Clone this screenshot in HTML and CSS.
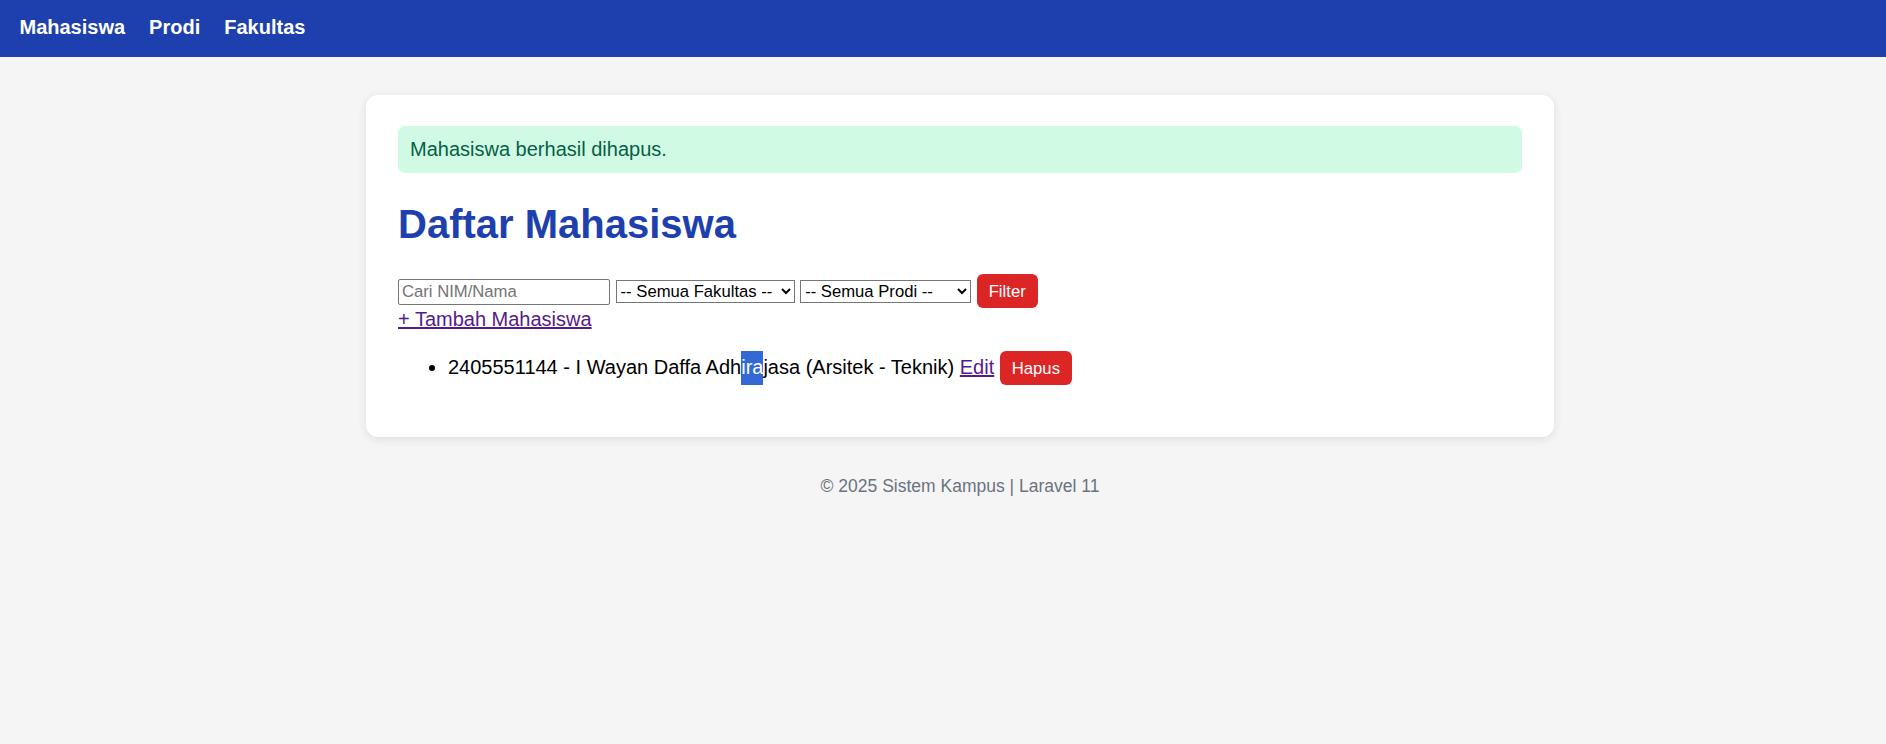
FILE: index.html
```html
<!DOCTYPE html>
<html lang="id">
<head>
<meta charset="utf-8">
<title>Daftar Mahasiswa</title>
<link rel="stylesheet" href="styles.css">
</head>
<body>
<div class="page">
  <nav class="topbar">
    <a class="nav-link" href="#">Mahasiswa</a>
    <a class="nav-link" href="#">Prodi</a>
    <a class="nav-link" href="#">Fakultas</a>
  </nav>

  <main class="card">
    <div class="alert">Mahasiswa berhasil dihapus.</div>
    <h1 class="title">Daftar Mahasiswa</h1>

    <form class="filter">
      <input class="search" type="text" placeholder="Cari NIM/Nama">
      <select class="select select-fak"><option>-- Semua Fakultas --</option></select>
      <select class="select select-prodi"><option>-- Semua Prodi --</option></select>
      <button class="btn" type="button">Filter</button>
    </form>
    <a class="link" href="#">+ Tambah Mahasiswa</a>

    <ul class="list">
      <li>2405551144 - I Wayan Daffa Adh<span class="hl">ira</span>jasa (Arsitek - Teknik) <a class="link" href="#">Edit</a> <button class="btn" type="button">Hapus</button></li>
    </ul>
  </main>

  <footer class="foot">© 2025 Sistem Kampus | Laravel 11</footer>
</div>
</body>
</html>
```

FILE: styles.css
```css
html, body {
  margin: 0;
  padding: 0;
  overflow: hidden;
}

body {
  background: #f5f5f5;
  font-family: "Liberation Sans", Arial, sans-serif;
  font-size: 20px;
  color: #000;
}

.page {
  width: 1920px;
  min-height: 744px;
}

.topbar {
  display: flex;
  gap: 24px;
  height: 57px;
  box-sizing: border-box;
  padding: 16px 19.5px 18px;
  background: #1e40af;
  line-height: 23px;
}

.nav-link {
  color: #fff;
  font-weight: bold;
  font-size: 20px;
  text-decoration: none;
}

.card {
  display: block;
  width: 1188px;
  box-sizing: border-box;
  margin: 38px auto 0;
  padding: 31px 32px 32px;
  background: #fff;
  border-radius: 12px;
  box-shadow: 0 2px 10px rgba(0, 0, 0, 0.1);
}

.alert {
  background: #d1fae5;
  color: #065f46;
  padding: 12px;
  line-height: 23px;
  border-radius: 7px;
  margin-bottom: 28px;
}

.title {
  margin: 0 0 27px;
  font-size: 40px;
  line-height: 46px;
  color: #1e40af;
  font-weight: bold;
}

.filter {
  margin: 0;
  line-height: 23px;
}

.search {
  width: 212px;
  height: 26px;
  box-sizing: border-box;
  padding: 0 3px;
  border: 1px solid #767676;
  border-radius: 2px;
  font-family: "Liberation Sans", Arial, sans-serif;
  font-size: 16.67px;
  color: #000;
  background: #fff;
}

.search::placeholder {
  color: #757575;
}

.select {
  height: 23px;
  box-sizing: border-box;
  border: 1px solid #767676;
  font-family: "Liberation Sans", Arial, sans-serif;
  font-size: 16.67px;
  color: #000;
  background: #fff;
}

.select-fak {
  width: 179px;
}

.select-prodi {
  width: 171px;
}

.btn {
  background: #dc2626;
  color: #fff;
  border: none;
  border-radius: 6px;
  padding: 7.5px 12px;
  font-family: "Liberation Sans", Arial, sans-serif;
  font-size: 16.67px;
  line-height: 19px;
  cursor: pointer;
}

.link {
  color: #551a8b;
  text-decoration: underline;
  line-height: 23px;
}

.list {
  margin: 20px 0;
  padding-left: 50px;
  line-height: 23px;
}

.hl {
  background: #3369d6;
  color: #fff;
  padding: 4.5px 0 7px;
}

.foot {
  margin-top: 39px;
  text-align: center;
  font-size: 17.5px;
  color: #6b7280;
  width: 1920px;
}
```
